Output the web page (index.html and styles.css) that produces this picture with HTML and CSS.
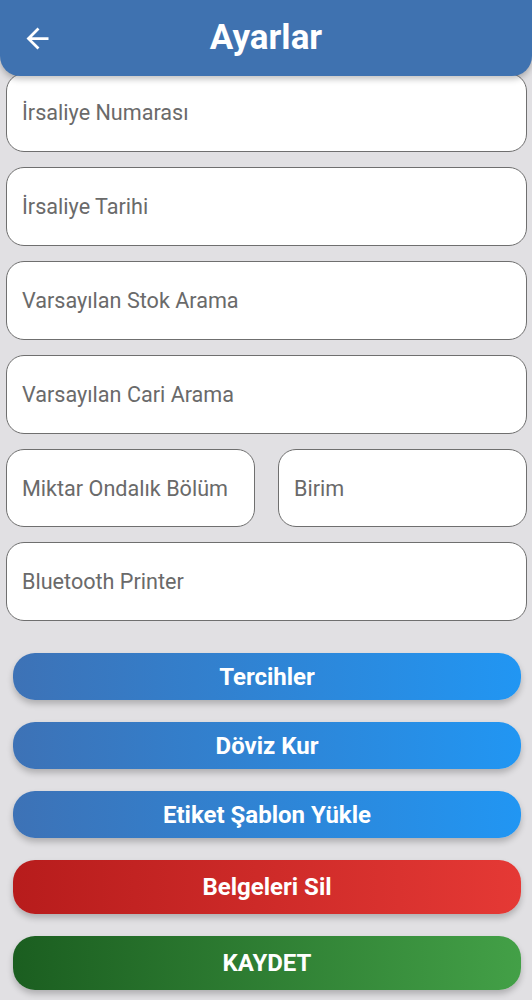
FILE: index.html
```html
<!DOCTYPE html>
<html lang="tr">
<head>
<meta charset="utf-8">
<title>Ayarlar</title>
<link rel="stylesheet" href="styles.css">
</head>
<body>
<header class="appbar">
  <span class="back">
    <svg width="33" height="33" viewBox="0 0 24 24"><path d="M20 11H7.83l5.59-5.59L12 4l-8 8 8 8 1.41-1.41L7.83 13H20v-2z" fill="#fff"/></svg>
  </span>
  <h1 class="title">Ayarlar</h1>
</header>
<main class="content">
  <div class="fields">
    <div class="field">İrsaliye Numarası</div>
    <div class="field">İrsaliye Tarihi</div>
    <div class="field">Varsayılan Stok Arama</div>
    <div class="field">Varsayılan Cari Arama</div>
    <div class="row">
      <div class="field">Miktar Ondalık Bölüm</div>
      <div class="field">Birim</div>
    </div>
    <div class="field">Bluetooth Printer</div>
  </div>
  <div class="buttons">
    <button class="btn blue">Tercihler</button>
    <button class="btn blue">Döviz Kur</button>
    <button class="btn blue">Etiket Şablon Yükle</button>
    <button class="btn red tall">Belgeleri Sil</button>
    <button class="btn green tall">KAYDET</button>
  </div>
</main>
</body>
</html>
```
FILE: styles.css
```css
* { box-sizing: border-box; }
html, body { margin: 0; padding: 0; }
body {
  background: #e1e0e3;
  font-family: Roboto, "Noto Sans", sans-serif;
  width: 532px;
  height: 1000px;
  overflow: hidden;
}
.appbar {
  position: relative;
  z-index: 2;
  height: 76px;
  background: #3f72b0;
  border-radius: 0 0 20px 20px;
  box-shadow: 0 3px 6px rgba(0,0,0,0.25);
  display: flex;
  align-items: center;
  justify-content: center;
}
.back {
  position: absolute;
  left: 21px;
  top: 22px;
  width: 33px;
  height: 33px;
  display: flex;
}
.title {
  margin: 0;
  color: #fff;
  font-size: 35px;
  font-weight: 700;
  line-height: 1;
  padding-bottom: 2px;
}
.content {
  margin-top: -3px;
  padding: 0 5px 0 6px;
}
.fields {
  display: flex;
  flex-direction: column;
  gap: 15px;
}
.field {
  height: 79px;
  background: #fff;
  border: 1.5px solid #6f6f6f;
  border-radius: 18px;
  display: flex;
  align-items: center;
  padding-left: 15px;
  font-size: 21.6px;
  color: #6a6a6a;
}
.row {
  display: flex;
  gap: 23px;
}
.row .field { flex: 1; height: 78px; }
.buttons {
  margin-top: 32px;
  padding: 0 6px 0 7px;
  display: flex;
  flex-direction: column;
  gap: 22px;
}
.btn {
  display: block;
  width: 100%;
  height: 47px;
  border: none;
  border-radius: 22px;
  color: #fff;
  font-family: Roboto, "Noto Sans", sans-serif;
  font-size: 24px;
  font-weight: 700;
  box-shadow: 0 4px 6px rgba(0,0,0,0.22);
  padding: 0;
}
.btn.tall { height: 54px; }
.blue { background: linear-gradient(90deg, #3d72b6, #2196f3); }
.red { background: linear-gradient(90deg, #b71c1c, #e53935); }
.green { background: linear-gradient(90deg, #1b5e20, #43a047); }
```
